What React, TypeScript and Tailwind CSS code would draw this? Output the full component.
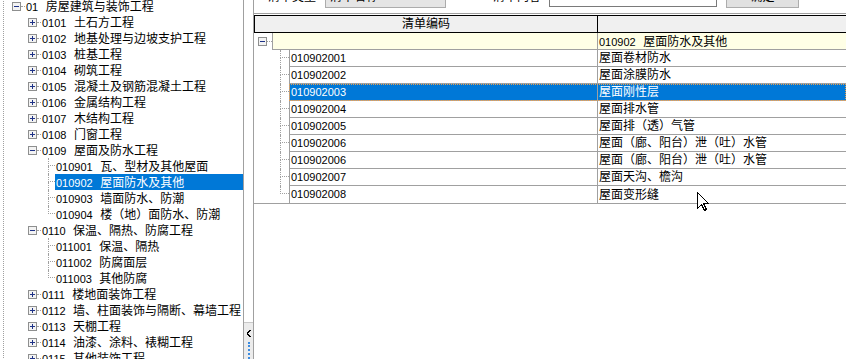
import React from 'react'

const FONT = { fontFamily: '"Liberation Sans", "Noto Sans CJK SC", sans-serif' }

const Box = ({ open }: { open: boolean }) => (
    <svg width="9" height="9" viewBox="0 0 9 9" shapeRendering="crispEdges" className="shrink-0">
        <rect x="0.5" y="0.5" width="8" height="8" fill="#f3f3f3" stroke="#8e8f8f" />
        <path d="M2 4.5h5" stroke="#1e3287" />
        {!open && <path d="M4.5 2v5" stroke="#1e3287" />}
    </svg>
)

type Node = { code: string; name: string; open?: boolean; children?: { code: string; name: string }[] }

const tree: Node[] = [
    { code: '0101', name: '土石方工程' },
    { code: '0102', name: '地基处理与边坡支护工程' },
    { code: '0103', name: '桩基工程' },
    { code: '0104', name: '砌筑工程' },
    { code: '0105', name: '混凝土及钢筋混凝土工程' },
    { code: '0106', name: '金属结构工程' },
    { code: '0107', name: '木结构工程' },
    { code: '0108', name: '门窗工程' },
    {
        code: '0109', name: '屋面及防水工程', open: true, children: [
            { code: '010901', name: '瓦、型材及其他屋面' },
            { code: '010902', name: '屋面防水及其他' },
            { code: '010903', name: '墙面防水、防潮' },
            { code: '010904', name: '楼（地）面防水、防潮' },
        ],
    },
    {
        code: '0110', name: '保温、隔热、防腐工程', open: true, children: [
            { code: '011001', name: '保温、隔热' },
            { code: '011002', name: '防腐面层' },
            { code: '011003', name: '其他防腐' },
        ],
    },
    { code: '0111', name: '楼地面装饰工程' },
    { code: '0112', name: '墙、柱面装饰与隔断、幕墙工程' },
    { code: '0113', name: '天棚工程' },
    { code: '0114', name: '油漆、涂料、裱糊工程' },
    { code: '0115', name: '其他装饰工程' },
]

const rows = [
    ['010902001', '屋面卷材防水'],
    ['010902002', '屋面涂膜防水'],
    ['010902003', '屋面刚性层'],
    ['010902004', '屋面排水管'],
    ['010902005', '屋面排（透）气管'],
    ['010902006', '屋面（廊、阳台）泄（吐）水管'],
    ['010902006', '屋面（廊、阳台）泄（吐）水管'],
    ['010902007', '屋面天沟、檐沟'],
    ['010902008', '屋面变形缝'],
]

// little elbow connector: vertical dotted line + horizontal dotted tick at row middle
const Elbow = ({ last, w }: { last: boolean; w: string }) => (
    <div className={`flex h-full shrink-0 flex-col ${w}`}>
        <div className="h-[8px] border-b border-l border-dotted border-[#a0a0a0]" />
        <div className={`flex-1 ${last ? '' : 'border-l border-dotted border-[#a0a0a0]'}`} />
    </div>
)

const Label = ({ code, name }: { code: string; name: string }) => (
    <span className="whitespace-nowrap">
        <span className="text-[11px]">{code}</span> <span className="ml-[3px] text-[12px]">{name}</span>
    </span>
)

export default function App() {
    return (
        <div className="relative flex h-[359px] w-[846px] overflow-hidden bg-white text-black" style={FONT}>
            {/* left tree */}
            <div className="w-[244px] shrink-0 overflow-hidden border-r border-[#a0a0a0]">
                <div className="ml-[3px] -mt-[2px] h-[380px] border-l border-dotted border-[#a0a0a0]">
                    <div className="flex h-[16px] items-center pl-[8px]">
                        <Box open />
                        <div className="mr-[1px] h-0 w-[4px] border-t border-dotted border-[#a0a0a0]" />
                        <Label code="01" name="房屋建筑与装饰工程" />
                    </div>
                    {tree.map((n) => (
                        <React.Fragment key={n.code}>
                            <div className="flex h-[16px] items-center pl-[24px]">
                                <Box open={!!n.open} />
                                <div className="mr-[1px] h-0 w-[4px] border-t border-dotted border-[#a0a0a0]" />
                                <Label code={n.code} name={n.name} />
                            </div>
                            {n.children?.map((c, i) => {
                                const sel = c.code === '010902'
                                return (
                                    <div key={c.code} className="flex h-[16px] items-stretch pl-[44px]">
                                        <Elbow last={i === n.children!.length - 1} w="w-[7px]" />
                                        <div className={`flex flex-1 items-center pl-[1px] ${sel ? 'bg-[#0078d7] text-white' : ''}`}>
                                            <Label code={c.code} name={c.name} />
                                        </div>
                                    </div>
                                )
                            })}
                        </React.Fragment>
                    ))}
                </div>
            </div>

            {/* splitter */}
            <div className="flex w-[9px] shrink-0 flex-col justify-end">
                <div className="flex h-[37px] flex-col items-center border-t border-[#c8c8c8] bg-[#ececec]">
                    <svg width="6" height="9" viewBox="0 0 6 9" className="mt-[6px]" shapeRendering="crispEdges">
                        <path d="M4 1L1.5 4.5L4 8" fill="none" stroke="#000" strokeWidth="1.6" />
                    </svg>
                    <div className="mt-[4px] flex-1 border-l-2 border-dotted border-[#3c8ce0]" />
                </div>
            </div>

            {/* right panel */}
            <div className="flex min-w-0 flex-1 flex-col border-l border-[#a0a0a0]">
                <div className="h-[14px] shrink-0 overflow-hidden border-b border-[#a0a0a0]">
                    <div className="-mt-[15px] flex h-[24px] items-center whitespace-nowrap pl-[14px] text-[12px]">
                        <span className="w-[48px]">清单类型</span>
                        <div className="ml-[9px] flex h-[21px] w-[121px] items-center justify-between border border-[#acacac] bg-[#e5e5e5] px-[4px]">
                            <span>清单名称</span>
                            <span className="text-[8px] text-[#606060]">▼</span>
                        </div>
                        <span className="ml-[47px] w-[48px]">清单内容</span>
                        <div className="ml-[8px] h-[20px] w-[168px] border border-[#7a7a7a] bg-white" />
                        <div className="ml-[9px] flex h-[22px] w-[73px] items-center justify-center border border-[#adadad] bg-[#e1e1e1]">确定</div>
                    </div>
                </div>

                <div className="mt-[1px] border-b border-[#a0a0a0]">
                    {/* header */}
                    <div className="flex h-[18px] border-y border-l border-black bg-[#f0f0f0] text-[12px]">
                        <div className="flex w-[343px] items-center justify-center border-r border-black">清单编码</div>
                        <div className="flex-1" />
                    </div>

                    {/* group row */}
                    <div className="flex h-[17px]">
                        <div className="flex w-[18px] shrink-0 items-center pl-[4px]">
                            <Box open />
                            <div className="h-0 flex-1 border-t border-dotted border-[#a0a0a0]" />
                        </div>
                        <div className="w-[325px] border-b border-l border-[#a0a0a0] bg-[#ffffe6]" />
                        <div className="flex flex-1 items-center border-b border-l border-[#a0a0a0] bg-[#ffffe6] pl-[1px]">
                            <Label code="010902" name="屋面防水及其他" />
                        </div>
                    </div>

                    {rows.map(([code, name], i) => {
                        const sel = i === 2
                        const last = i === rows.length - 1
                        const b = last ? '' : 'border-b'
                        const cell = sel
                            ? 'bg-[#0078d7] text-white outline-1 outline-dotted -outline-offset-1 outline-[#e8a050]'
                            : ''
                        return (
                            <div key={i} className="flex h-[17px]">
                                <div className="flex w-[35px] shrink-0 pl-[26px]">
                                    <Elbow last={last} w="w-[9px]" />
                                </div>
                                <div className={`flex flex-1 ${cell}`}>
                                    <div className={`flex w-[308px] items-center border-l border-[#a0a0a0] pl-[1px] text-[11px] ${b}`}>{code}</div>
                                    <div className={`flex flex-1 items-center border-l border-[#a0a0a0] pl-[1px] text-[12px] ${b}`}>{name}</div>
                                </div>
                            </div>
                        )
                    })}
                </div>
            </div>

            {/* mouse pointer */}
            <svg width="13" height="20" viewBox="0 0 13 20" className="absolute left-[697px] top-[192px]" shapeRendering="crispEdges">
                <path d="M0.5 0.5L0.5 16.5L4.5 12.5L7.5 18.5L9.5 17.5L6.5 11.5L11.5 11.5Z" fill="#fff" stroke="#000" />
            </svg>
        </div>
    )
}
